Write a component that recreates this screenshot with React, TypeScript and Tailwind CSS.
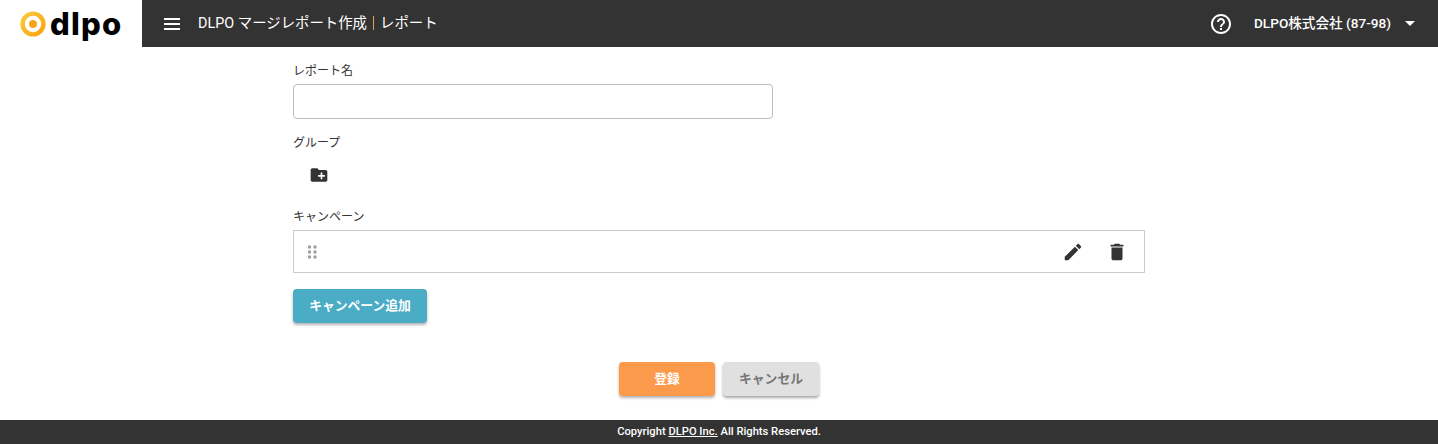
const FONT = "font-['Roboto','Noto_Sans_CJK_JP',sans-serif]";

function Logo() {
  return (
    <div className="flex w-[142px] shrink-0 items-center bg-white pl-[20px]">
      <svg width="26" height="26" viewBox="0 0 26 26" className="shrink-0">
        <defs>
          <linearGradient id="ring" x1="0" y1="0" x2="1" y2="1">
            <stop offset="0" stopColor="#fdc93f" />
            <stop offset="1" stopColor="#f9a30f" />
          </linearGradient>
        </defs>
        <circle cx="13" cy="13" r="10.4" fill="none" stroke="url(#ring)" strokeWidth="4.4" />
        <circle cx="13" cy="13" r="4" fill="#f9a51a" />
      </svg>
      <span className="ml-[4px] font-['Inter',sans-serif] text-[31px] leading-none font-extrabold tracking-[1.2px] text-black">
        dlpo
      </span>
    </div>
  );
}

function Header() {
  return (
    <header className="flex h-[47px] shrink-0">
      <Logo />
      <div className="flex flex-1 items-center bg-[#333333] pr-[23px] pl-[22px] text-white">
        <svg width="16" height="12" viewBox="0 0 16 12" className="shrink-0" fill="#ffffff">
          <rect y="0" width="16" height="2" />
          <rect y="5" width="16" height="2" />
          <rect y="10" width="16" height="2" />
        </svg>
        <span className="ml-[18px] flex items-center gap-[6px] text-[14.4px]">
          <span>DLPO マージレポート作成</span>
          <span className="h-[14px] w-px bg-[#e0a050]" />
          <span>レポート</span>
        </span>
        <svg width="24" height="24" viewBox="0 0 24 24" className="ml-auto" fill="#ffffff">
          <path d="M11 18h2v-2h-2v2zm1-16C6.48 2 2 6.48 2 12s4.480 10 10 10 10-4.480 10-10S17.520 2 12 2zm0 18c-4.410 0-8-3.590-8-8s3.590-8 8-8 8 3.590 8 8-3.590 8-8 8zm0-14c-2.210 0-4 1.790-4 4h2c0-1.100.9-2 2-2s2 .9 2 2c0 2-3 1.750-3 5h2c0-2.250 3-2.500 3-5 0-2.210-1.790-4-4-4z" />
        </svg>
        <span className="ml-[21px] text-[13.6px] font-medium">DLPO株式会社 (87-98)</span>
        <svg width="10" height="5" viewBox="0 0 10 5" className="ml-[14px]" fill="#ffffff">
          <path d="M0 0l5 5 5-5z" />
        </svg>
      </div>
    </header>
  );
}

function Grip() {
  return (
    <svg width="9" height="14" viewBox="0 0 9 14" fill="#9e9e9e">
      {[1.5, 7].map((x) =>
        [2, 7, 12].map((y) => <circle key={`${x}-${y}`} cx={x} cy={y} r="1.7" />),
      )}
    </svg>
  );
}

export default function App() {
  return (
    <div className={`flex h-[444px] flex-col overflow-hidden bg-white ${FONT} text-[#333333]`}>
      <Header />
      <main className="flex-1">
        <div className="mx-auto w-[852px]">
          <label className="mt-[14px] block text-[12px] leading-[20px]">レポート名</label>
          <input className="mt-[3px] block h-[35px] w-[480px] rounded-[4px] border border-[#bdbdbd] bg-white" />

          <label className="mt-[14px] block text-[12px] leading-[20px]">グループ</label>
          <div className="mt-[11px] flex h-[22px] items-center pl-[16px]">
            <svg width="20" height="20" viewBox="0 0 24 24" fill="#333333">
              <path d="M20 6h-8l-2-2H4c-1.110 0-1.990.89-1.990 2L2 18c0 1.110.89 2 2 2h16c1.110 0 2-.89 2-2V8c0-1.110-.89-2-2-2zm-1 8h-3v3h-2v-3h-3v-2h3V9h2v3h3v2z" />
            </svg>
          </div>

          <label className="mt-[21px] block text-[12px] leading-[20px]">キャンペーン</label>
          <div className="mt-[3px] flex h-[43px] items-center border border-[#cccccc] pr-[16px] pl-[14px]">
            <Grip />
            <svg width="22" height="22" viewBox="0 0 24 24" fill="#333333" className="ml-auto">
              <path d="M3 17.250V21h3.750L17.810 9.940l-3.750-3.750L3 17.250zM20.710 7.040c.39-.39.39-1.020 0-1.410l-2.340-2.340c-.39-.39-1.020-.39-1.410 0l-1.830 1.830 3.750 3.750 1.830-1.830z" />
            </svg>
            <svg width="22" height="22" viewBox="0 0 24 24" fill="#333333" className="ml-[22px]">
              <path d="M6 19c0 1.100.9 2 2 2h8c1.100 0 2-.9 2-2V7H6v12zM19 4h-3.500l-1-1h-5l-1 1H5v2h14V4z" />
            </svg>
          </div>

          <button className="mt-[16px] h-[34px] w-[134px] rounded-[4px] bg-[#4bacc6] text-[12.8px] font-bold text-white shadow-[0_2px_3px_rgba(0,0,0,0.3)]">
            キャンペーン追加
          </button>

          <div className="mt-[39px] flex justify-center gap-[8px]">
            <button className="h-[34px] w-[96px] rounded-[4px] bg-[#fb9a4a] text-[12.8px] font-bold text-white shadow-[0_2px_3px_rgba(0,0,0,0.3)]">
              登録
            </button>
            <button className="h-[34px] w-[96px] rounded-[4px] bg-[#e0e0e0] text-[12.8px] font-bold text-[#757575] shadow-[0_2px_3px_rgba(0,0,0,0.35)]">
              キャンセル
            </button>
          </div>
        </div>
      </main>
      <footer className="flex h-[24px] shrink-0 items-center justify-center bg-[#333333] text-[11.2px] font-medium text-white">
        <span>
          Copyright <u>DLPO Inc.</u> All Rights Reserved.
        </span>
      </footer>
    </div>
  );
}
